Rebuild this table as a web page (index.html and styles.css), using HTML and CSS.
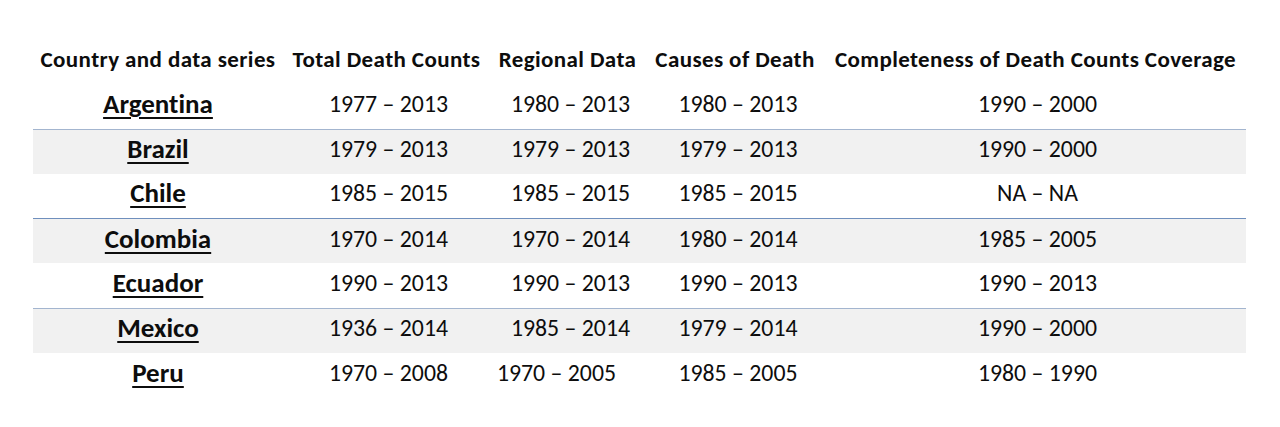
FILE: index.html
```html
<!DOCTYPE html>
<html lang="en">
<head>
<meta charset="utf-8">
<title>Death counts data series</title>
<link rel="stylesheet" href="styles.css">
</head>
<body>
<div class="page">
  <div class="table">
    <div class="row head">
      <div class="c c1">Country and data series</div>
      <div class="c c2">Total Death Counts</div>
      <div class="c c3">Regional Data</div>
      <div class="c c4">Causes of Death</div>
      <div class="c c5">Completeness of Death Counts Coverage</div>
    </div>
    <div class="row">
      <div class="c c1"><span class="country">Argentina</span></div>
      <div class="c c2">1977 – 2013</div>
      <div class="c c3">1980 – 2013</div>
      <div class="c c4">1980 – 2013</div>
      <div class="c c5">1990 – 2000</div>
    </div>
    <div class="row band">
      <div class="c c1"><span class="country">Brazil</span></div>
      <div class="c c2">1979 – 2013</div>
      <div class="c c3">1979 – 2013</div>
      <div class="c c4">1979 – 2013</div>
      <div class="c c5">1990 – 2000</div>
    </div>
    <div class="row">
      <div class="c c1"><span class="country">Chile</span></div>
      <div class="c c2">1985 – 2015</div>
      <div class="c c3">1985 – 2015</div>
      <div class="c c4">1985 – 2015</div>
      <div class="c c5">NA – NA</div>
    </div>
    <div class="row band dark">
      <div class="c c1"><span class="country">Colombia</span></div>
      <div class="c c2">1970 – 2014</div>
      <div class="c c3">1970 – 2014</div>
      <div class="c c4">1980 – 2014</div>
      <div class="c c5">1985 – 2005</div>
    </div>
    <div class="row">
      <div class="c c1"><span class="country">Ecuador</span></div>
      <div class="c c2">1990 – 2013</div>
      <div class="c c3">1990 – 2013</div>
      <div class="c c4">1990 – 2013</div>
      <div class="c c5">1990 – 2013</div>
    </div>
    <div class="row band">
      <div class="c c1"><span class="country">Mexico</span></div>
      <div class="c c2">1936 – 2014</div>
      <div class="c c3">1985 – 2014</div>
      <div class="c c4">1979 – 2014</div>
      <div class="c c5">1990 – 2000</div>
    </div>
    <div class="row">
      <div class="c c1"><span class="country">Peru</span></div>
      <div class="c c2">1970 – 2008</div>
      <div class="c c3 shift">1970 – 2005</div>
      <div class="c c4">1985 – 2005</div>
      <div class="c c5">1980 – 1990</div>
    </div>
  </div>
</div>
</body>
</html>
```
FILE: styles.css
```css
html, body {
  margin: 0;
  padding: 0;
  background: #ffffff;
}
body {
  font-family: Carlito, Calibri, Lato, "Liberation Sans", sans-serif;
  font-variant-ligatures: none;
  color: #0d0d0d;
}
.page {
  width: 1280px;
  height: 427px;
  padding: 38px 0 0 33px;
  box-sizing: border-box;
}
.table {
  width: 1213px;
  display: flex;
  flex-direction: column;
}
.row {
  display: grid;
  grid-template-columns: 250px 207px 155px 180px 421px;
  height: 44.8px;
  box-sizing: border-box;
  align-items: center;
  padding-bottom: 6px;
  font-size: 23.8px;
}
.row.head {
  height: 46px;
  font-weight: 700;
  font-size: 23px;
  letter-spacing: 0.4px;
  padding-bottom: 4px;
}
.row.band {
  background: #f1f1f1;
  border-top: 1px solid #a3b5cf;
}
.row.band.dark {
  border-top-color: #6f8fbd;
}
.c {
  text-align: center;
  white-space: nowrap;
}
.row:not(.head) .c2,
.row:not(.head) .c5 {
  padding-left: 4px;
}
.row:not(.head) .c3,
.row:not(.head) .c4 {
  padding-left: 6px;
}
.country {
  font-weight: 700;
  font-size: 27px;
  text-decoration: underline;
  text-decoration-thickness: 2px;
  text-underline-offset: 4px;
}
.row:not(.head) .shift {
  padding-left: 0;
  padding-right: 22px;
}
```
